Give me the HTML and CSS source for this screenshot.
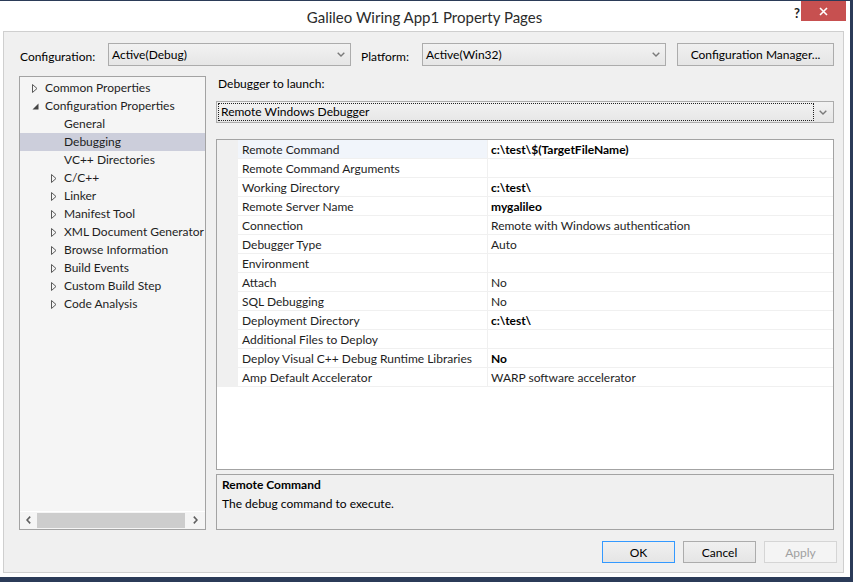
FILE: index.html
```
<!DOCTYPE html>
<html>
<head>
<meta charset="utf-8">
<title>Galileo Wiring App1 Property Pages</title>
<link rel="stylesheet" href="styles.css">
</head>
<body>
<div class="window">
  <div class="titlebar">
    <div></div>
    <div class="title">Galileo Wiring App1 Property Pages</div>
    <div class="caption-btns">
      <span class="help">?</span>
      <span class="close"><svg width="9" height="9" viewBox="0 0 9 9"><path d="M1 1 L8 8 M8 1 L1 8" stroke="#fff" stroke-width="1.6" fill="none"/></svg></span>
    </div>
  </div>
  <div class="client">
    <div class="config-row">
      <span class="lbl lbl-config">Configuration:</span>
      <div class="combo combo-config"><span class="combo-text">Active(Debug)</span><svg class="chev" width="8" height="5" viewBox="0 0 8 5"><path d="M0.7 0.7 L4 4 L7.3 0.7" fill="none" stroke="#7a7a7a" stroke-width="1.4"/></svg></div>
      <span class="lbl lbl-platform">Platform:</span>
      <div class="combo combo-platform"><span class="combo-text">Active(Win32)</span><svg class="chev" width="8" height="5" viewBox="0 0 8 5"><path d="M0.7 0.7 L4 4 L7.3 0.7" fill="none" stroke="#7a7a7a" stroke-width="1.4"/></svg></div>
      <button class="btn btn-cfgmgr">Configuration Manager...</button>
    </div>
    <div class="main">
      <div class="tree">
        <ul class="tree-list">
          <li class="lvl0"><span class="exp"><svg width="6" height="9" viewBox="0 0 6 9"><path d="M0.5 0.5 L5 4.5 L0.5 8.5 Z" fill="none" stroke="#595959"/></svg></span>Common Properties</li>
          <li class="lvl0"><span class="exp"><svg width="7" height="7" viewBox="0 0 7 7"><path d="M6.5 0.5 L6.5 6.5 L0.5 6.5 Z" fill="#444"/></svg></span>Configuration Properties</li>
          <li class="lvl1"><span class="exp"></span>General</li>
          <li class="lvl1 selected"><span class="exp"></span>Debugging</li>
          <li class="lvl1"><span class="exp"></span>VC++ Directories</li>
          <li class="lvl1"><span class="exp"><svg width="6" height="9" viewBox="0 0 6 9"><path d="M0.5 0.5 L5 4.5 L0.5 8.5 Z" fill="none" stroke="#595959"/></svg></span>C/C++</li>
          <li class="lvl1"><span class="exp"><svg width="6" height="9" viewBox="0 0 6 9"><path d="M0.5 0.5 L5 4.5 L0.5 8.5 Z" fill="none" stroke="#595959"/></svg></span>Linker</li>
          <li class="lvl1"><span class="exp"><svg width="6" height="9" viewBox="0 0 6 9"><path d="M0.5 0.5 L5 4.5 L0.5 8.5 Z" fill="none" stroke="#595959"/></svg></span>Manifest Tool</li>
          <li class="lvl1"><span class="exp"><svg width="6" height="9" viewBox="0 0 6 9"><path d="M0.5 0.5 L5 4.5 L0.5 8.5 Z" fill="none" stroke="#595959"/></svg></span>XML Document Generator</li>
          <li class="lvl1"><span class="exp"><svg width="6" height="9" viewBox="0 0 6 9"><path d="M0.5 0.5 L5 4.5 L0.5 8.5 Z" fill="none" stroke="#595959"/></svg></span>Browse Information</li>
          <li class="lvl1"><span class="exp"><svg width="6" height="9" viewBox="0 0 6 9"><path d="M0.5 0.5 L5 4.5 L0.5 8.5 Z" fill="none" stroke="#595959"/></svg></span>Build Events</li>
          <li class="lvl1"><span class="exp"><svg width="6" height="9" viewBox="0 0 6 9"><path d="M0.5 0.5 L5 4.5 L0.5 8.5 Z" fill="none" stroke="#595959"/></svg></span>Custom Build Step</li>
          <li class="lvl1"><span class="exp"><svg width="6" height="9" viewBox="0 0 6 9"><path d="M0.5 0.5 L5 4.5 L0.5 8.5 Z" fill="none" stroke="#595959"/></svg></span>Code Analysis</li>
        </ul>
        <div class="hscroll">
          <span class="sb-arrow"><svg width="5" height="8" viewBox="0 0 5 8"><path d="M4.2 0.6 L1 4 L4.2 7.4" fill="none" stroke="#606060" stroke-width="1.6"/></svg></span>
          <span class="sb-thumb"></span>
          <span class="sb-arrow sb-right"><svg width="5" height="8" viewBox="0 0 5 8"><path d="M0.8 0.6 L4 4 L0.8 7.4" fill="none" stroke="#606060" stroke-width="1.6"/></svg></span>
        </div>
      </div>
      <div class="panel">
        <div class="launch-label">Debugger to launch:</div>
        <div class="combo combo-launch"><span class="focus">Remote Windows Debugger</span><svg class="chev" width="8" height="5" viewBox="0 0 8 5"><path d="M0.7 0.7 L4 4 L7.3 0.7" fill="none" stroke="#7a7a7a" stroke-width="1.4"/></svg></div>
        <div class="grid">
          <div class="row current"><div class="gutter"></div><div class="name">Remote Command</div><div class="value bold">c:\test\$(TargetFileName)</div></div>
          <div class="row"><div class="gutter"></div><div class="name">Remote Command Arguments</div><div class="value"></div></div>
          <div class="row"><div class="gutter"></div><div class="name">Working Directory</div><div class="value bold">c:\test\</div></div>
          <div class="row"><div class="gutter"></div><div class="name">Remote Server Name</div><div class="value bold">mygalileo</div></div>
          <div class="row"><div class="gutter"></div><div class="name">Connection</div><div class="value">Remote with Windows authentication</div></div>
          <div class="row"><div class="gutter"></div><div class="name">Debugger Type</div><div class="value">Auto</div></div>
          <div class="row"><div class="gutter"></div><div class="name">Environment</div><div class="value"></div></div>
          <div class="row"><div class="gutter"></div><div class="name">Attach</div><div class="value">No</div></div>
          <div class="row"><div class="gutter"></div><div class="name">SQL Debugging</div><div class="value">No</div></div>
          <div class="row"><div class="gutter"></div><div class="name">Deployment Directory</div><div class="value bold">c:\test\</div></div>
          <div class="row"><div class="gutter"></div><div class="name">Additional Files to Deploy</div><div class="value"></div></div>
          <div class="row"><div class="gutter"></div><div class="name">Deploy Visual C++ Debug Runtime Libraries</div><div class="value bold">No</div></div>
          <div class="row"><div class="gutter"></div><div class="name">Amp Default Accelerator</div><div class="value">WARP software accelerator</div></div>
        </div>
        <div class="desc">
          <div class="desc-title">Remote Command</div>
          <div class="desc-text">The debug command to execute.</div>
        </div>
      </div>
    </div>
    <div class="buttons">
      <button class="btn btn-dlg btn-default">OK</button>
      <button class="btn btn-dlg">Cancel</button>
      <button class="btn btn-dlg btn-disabled">Apply</button>
    </div>
  </div>
</div>
</body>
</html>
```
FILE: styles.css
```
* { box-sizing: border-box; }

html, body { margin: 0; }

body {
  background: #2b3b58;
  padding: 1px 3px 5px 0;
  width: 853px;
  height: 582px;
  font-family: Lato, "Liberation Sans", sans-serif;
  font-size: 12px;
  color: #000;
}

.window {
  width: 850px;
  height: 576px;
  background: #fff;
  display: flex;
  flex-direction: column;
  padding: 0 6px 4px 3px;
}

.titlebar {
  height: 30px;
  display: grid;
  grid-template-columns: 1fr auto 1fr;
  align-items: start;
  margin-right: -2px;
}

.title {
  font-size: 15px;
  line-height: 30px;
  padding-top: 1px;
  color: #2b2b2b;
  white-space: nowrap;
}

.caption-btns {
  justify-self: end;
  display: flex;
  align-items: flex-start;
}

.help {
  font-weight: bold;
  font-size: 13px;
  color: #222;
  line-height: 20px;
  margin-right: 1px;
  padding-top: 2px;
}

.close {
  width: 45px;
  height: 20px;
  background: #c75050;
  display: flex;
  align-items: center;
  justify-content: center;
}

.client {
  flex: 1;
  border: 1px solid #cfcfcf;
  background: #f0f0f0;
  padding: 11px 9px 9px 15px;
  display: flex;
  flex-direction: column;
}

.config-row {
  display: flex;
  align-items: center;
  height: 23px;
}

.lbl { white-space: nowrap; padding-top: 3px; }
.lbl-config { width: 89px; padding-left: 1px; }
.lbl-platform { width: 61px; margin-left: 10px; }

.combo {
  display: flex;
  align-items: center;
  height: 23px;
  border: 1px solid #acacac;
  background: linear-gradient(#f2f2f2, #e6e6e6);
  padding: 0 5px 0 3px;
}

.combo-text { flex: 1; white-space: nowrap; }
.combo-config { width: 243px; }
.combo-platform { width: 244px; }

.chev { flex: none; }

.btn {
  font-family: inherit;
  font-size: 12px;
  color: #000;
  border: 1px solid #acacac;
  background: linear-gradient(#f0f0f0, #e5e5e5);
  padding: 0;
  margin: 0;
}

.btn-cfgmgr {
  width: 157px;
  height: 23px;
  margin-left: 11px;
}

.main {
  display: flex;
  gap: 10px;
  margin-top: 10px;
  height: 454px;
}

.tree {
  width: 187px;
  border: 1px solid #a3a3a3;
  background: #f5f5f5;
  display: flex;
  flex-direction: column;
}

.tree-list {
  flex: 1;
  list-style: none;
  margin: 0;
  padding: 2px 0 0 0;
}

.tree-list li {
  height: 18px;
  line-height: 18px;
  display: flex;
  align-items: center;
  white-space: nowrap;
  color: #1e1e1e;
}

.tree-list li.lvl0 { padding-left: 12px; }
.tree-list li.lvl1 { padding-left: 31px; }
.tree-list li.selected { background: #cccedb; }

.exp {
  width: 13px;
  flex: none;
  display: flex;
  align-items: center;
}

.hscroll {
  height: 17px;
  border-top: 1px solid #fff;
  display: flex;
  align-items: center;
  margin-bottom: 1px;
}

.sb-arrow {
  width: 17px;
  height: 15px;
  display: flex;
  align-items: center;
  justify-content: center;
}

.sb-right { width: 20px; }

.sb-thumb {
  flex: 1;
  height: 15px;
  background: #cdcdcd;
}

.panel {
  width: 618px;
  display: flex;
  flex-direction: column;
}

.launch-label {
  height: 16px;
  line-height: 16px;
  padding-left: 2px;
}

.combo-launch {
  margin-top: 9px;
  height: 22px;
  padding: 0 6px 0 0;
}

.focus {
  flex: 1;
  height: 18px;
  line-height: 16px;
  border: 1px dotted #202020;
  padding-left: 2px;
  margin: 0 5px 0 1px;
}

.grid {
  margin-top: 16px;
  height: 331px;
  border: 1px solid #a3a3a3;
  background: #fff;
}

.row {
  display: grid;
  grid-template-columns: 21px 250px 1fr;
  height: 19px;
}

.gutter { background: #f0f0f0; }

.name, .value {
  height: 19px;
  padding-top: 1px;
  line-height: 17px;
  border-bottom: 1px solid #f0f0f0;
  white-space: nowrap;
  color: #1e1e1e;
}

.name {
  padding-left: 4px;
  border-right: 1px solid #f0f0f0;
}

.row.current .name { background: #f1f5fb; }

.value { padding-left: 3px; }
.value.bold { font-weight: bold; color: #000; }

.desc {
  margin-top: 4px;
  height: 56px;
  border: 1px solid #a3a3a3;
  background: #f0f0f0;
  padding-left: 5px;
  line-height: 19px;
}

.desc-title { font-weight: bold; }

.buttons {
  display: flex;
  justify-content: flex-end;
  gap: 8px;
  margin-top: 11px;
  margin-right: -3px;
}

.btn-dlg {
  width: 73px;
  height: 22px;
}

.btn-default { border-color: #3399ff; }

.btn-disabled {
  border-color: #d5d5d5;
  background: #f4f4f4;
  color: #a0a0a0;
}
```
